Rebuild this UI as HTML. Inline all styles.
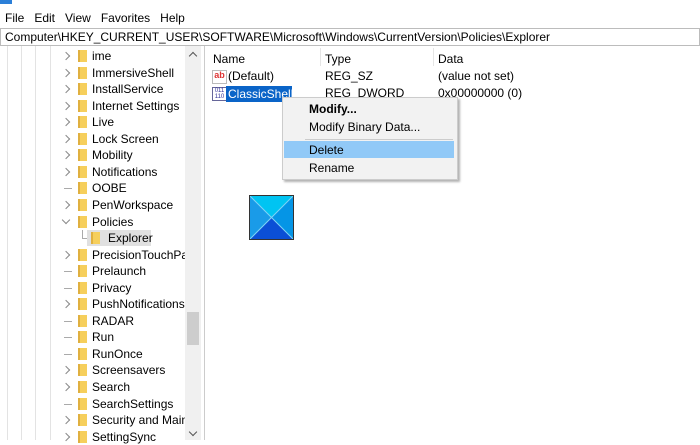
<!DOCTYPE html><html><head><style>
body{margin:0;width:700px;height:440px;overflow:hidden;background:#fff;font-family:"Liberation Sans",sans-serif;font-size:12px;color:#000;position:relative}
.a{position:absolute;white-space:nowrap}
.vl{position:absolute;top:46px;height:394px;width:1px;background:#e3e3e3}
.row{position:absolute;left:0;height:16px;line-height:16px;white-space:nowrap;overflow:hidden}
.chev{position:absolute;left:63px;top:5px;width:5px;height:5px;border-right:1px solid #888;border-top:1px solid #888;transform:rotate(45deg)}
.dash{position:absolute;left:64px;top:8px;width:8px;height:1px;background:#aaa}
.fold{position:absolute;left:78px;top:2px;width:7px;height:12px;background:#f6cf5c;border-left:2px solid #e0b040}
.t{position:absolute;left:92px;top:0}
</style></head><body>
<div class="a" style="left:0;top:0;width:12px;height:4px;background:#2b7fd8"></div>
<div class="a" style="left:5px;top:11px;font-size:12px">File&nbsp;&nbsp; Edit&nbsp;&nbsp; View&nbsp;&nbsp; Favorites&nbsp;&nbsp; Help</div>
<div class="a" style="left:0;top:28px;width:694px;height:16px;border:1px solid #bcbcbc;line-height:16px;padding-left:4px;font-size:12px">Computer\HKEY_CURRENT_USER\SOFTWARE\Microsoft\Windows\CurrentVersion\Policies\Explorer</div>
<div class="vl" style="left:7px"></div><div class="vl" style="left:21px"></div><div class="vl" style="left:35px"></div><div class="vl" style="left:50px"></div>
<div class="a" style="left:185px;top:46px;width:16px;height:394px;background:#f0f0f0"></div>
<div class="a" style="left:187px;top:312px;width:12px;height:33px;background:#cdcdcd"></div>
<div class="a" style="left:190px;top:53px;width:5px;height:5px;border-left:1.5px solid #555;border-top:1.5px solid #555;transform:rotate(45deg)"></div>
<div class="a" style="left:190px;top:429px;width:5px;height:5px;border-right:1.5px solid #555;border-bottom:1.5px solid #555;transform:rotate(45deg)"></div>
<div class="a" style="left:204px;top:46px;width:1px;height:394px;background:#ccc"></div>
<div id="tree"></div>
<div class="a" style="left:213px;top:52px">Name</div>
<div class="a" style="left:320px;top:48px;width:1px;height:18px;background:#e5e5e5"></div>
<div class="a" style="left:325px;top:52px">Type</div>
<div class="a" style="left:433px;top:48px;width:1px;height:18px;background:#e5e5e5"></div>
<div class="a" style="left:438px;top:52px">Data</div>
<div class="a" style="left:212px;top:70px;width:13px;height:12px;background:#fff;border:1px solid #bbb;font-size:9px;color:#d33;font-weight:bold;line-height:9px;text-align:center">ab</div>
<div class="a" style="left:228px;top:69px">(Default)</div>
<div class="a" style="left:325px;top:69px">REG_SZ</div>
<div class="a" style="left:438px;top:69px">(value not set)</div>
<div class="a" style="left:212px;top:87px;width:13px;height:12px;border:1px solid #669;font-size:6px;color:#339;line-height:6px;text-align:center">011<br>110</div>
<div class="a" style="left:226px;top:86px;width:64px;height:16px;background:#0a64c8;color:#fff;line-height:16px;padding-left:2px;overflow:hidden">ClassicShell</div>
<div class="a" style="left:325px;top:86px">REG_DWORD</div>
<div class="a" style="left:438px;top:86px">0x00000000 (0)</div>
<div class="a" style="left:282px;top:97px;width:174px;height:81px;background:#f2f2f2;border:1px solid #ccc;box-shadow:2px 2px 2px rgba(0,0,0,.3)">
<div class="a" style="left:26px;top:4px;font-weight:bold">Modify...</div>
<div class="a" style="left:26px;top:22px">Modify Binary Data...</div>
<div class="a" style="left:22px;top:41px;width:148px;height:1px;background:#ccc"></div>
<div class="a" style="left:1px;top:43px;width:170px;height:17px;background:#91c9f7"></div>
<div class="a" style="left:26px;top:45px">Delete</div>
<div class="a" style="left:26px;top:63px">Rename</div>
</div>
<svg class="a" style="left:249px;top:195px" width="45" height="45" viewBox="0 0 45 45"><rect width="45" height="45" fill="#1a9be8"/><polygon points="0,0 45,0 22.5,22.5" fill="#00c4f2"/><polygon points="0,45 45,45 22.5,22.5" fill="#0b4fd6"/><polygon points="45,0 45,45 22.5,22.5" fill="#0595e6"/><path d="M0 0L45 45M45 0L0 45" stroke="#7fd3f5" stroke-width="1"/><rect x=".5" y=".5" width="44" height="44" fill="none" stroke="#333"/></svg>
<script>
var items=[["ime","c"],["ImmersiveShell","c"],["InstallService","c"],["Internet Settings","c"],["Live","c"],["Lock Screen","c"],["Mobility","c"],["Notifications","c"],["OOBE","d"],["PenWorkspace","c"],["Policies","o"],["Explorer","e"],["PrecisionTouchPad","c"],["Prelaunch","d"],["Privacy","d"],["PushNotifications","c"],["RADAR","d"],["Run","d"],["RunOnce","d"],["Screensavers","c"],["Search","c"],["SearchSettings","d"],["Security and Maint","c"],["SettingSync","c"]];
var h="";items.forEach(function(it,i){var y=48+i*16.55;
if(it[1]=="e"){h+='<div class="row" style="top:'+y+'px;width:185px"><div class="a" style="left:82px;top:0;width:1px;height:8px;background:#aaa"></div><div class="a" style="left:82px;top:8px;width:6px;height:1px;background:#aaa"></div><div class="a" style="left:87px;top:0;width:64px;height:16px;background:#e0e0e0"></div><div class="fold" style="left:91px"></div><div class="t" style="left:108px">Explorer</div></div>';return;}
var m=it[1]=="c"?'<div class="chev"></div>':it[1]=="o"?'<div class="chev" style="transform:rotate(135deg);left:63px;top:3px"></div>':'<div class="dash"></div>';
h+='<div class="row" style="top:'+y+'px;width:185px">'+m+'<div class="fold"></div><div class="t">'+it[0]+'</div></div>';});
document.getElementById("tree").innerHTML=h;
</script>
</body></html>
